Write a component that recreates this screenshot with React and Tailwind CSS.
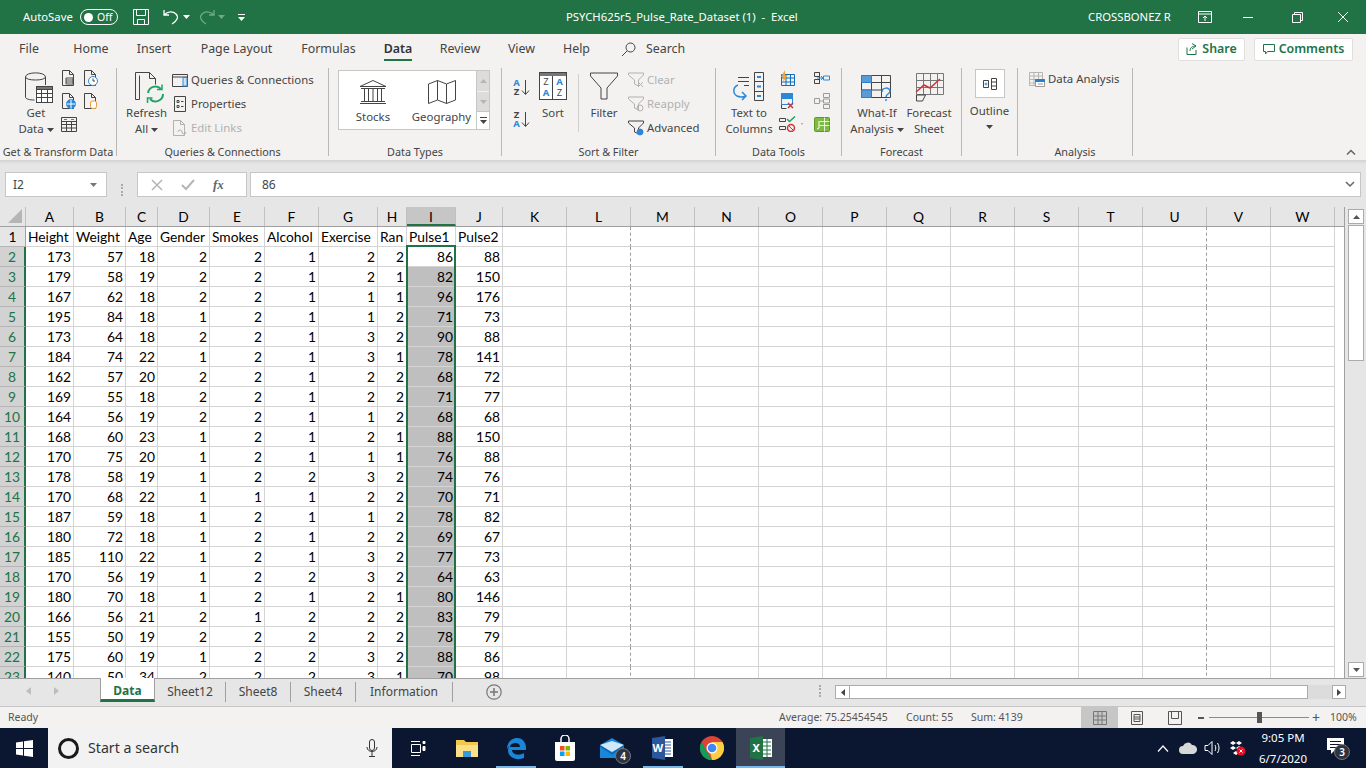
import React from 'react';

const tabs = [
  ['File', 'w-[58px]'], ['Home', 'w-[66px]'], ['Insert', 'w-[60px]'], ['Page Layout', 'w-[105px]'], ['Formulas', 'w-[79px]'],
  ['Data', 'w-[60px]'], ['Review', 'w-[64px]'], ['View', 'w-[59px]'], ['Help', 'w-[51px]'],
];

const columns = [
  ['A', 'w-[48px]'], ['B', 'w-[52px]'], ['C', 'w-[32px]'], ['D', 'w-[52px]'], ['E', 'w-[55px]'], ['F', 'w-[54px]'],
  ['G', 'w-[59px]'], ['H', 'w-[29px]'], ['I', 'w-[49px]'], ['J', 'w-[47px]'],
  ['K', 'w-[64px]'], ['L', 'w-[64px]'], ['M', 'w-[64px]'], ['N', 'w-[64px]'], ['O', 'w-[64px]'], ['P', 'w-[64px]'], ['Q', 'w-[64px]'],
  ['R', 'w-[64px]'], ['S', 'w-[64px]'], ['T', 'w-[64px]'], ['U', 'w-[64px]'], ['V', 'w-[64px]'], ['W', 'w-[64px]'],
];

const headers = ['Height', 'Weight', 'Age', 'Gender', 'Smokes', 'Alcohol', 'Exercise', 'Ran', 'Pulse1', 'Pulse2'];

const rows = [
  [173, 57, 18, 2, 2, 1, 2, 2, 86, 88],
  [179, 58, 19, 2, 2, 1, 2, 1, 82, 150],
  [167, 62, 18, 2, 2, 1, 1, 1, 96, 176],
  [195, 84, 18, 1, 2, 1, 1, 2, 71, 73],
  [173, 64, 18, 2, 2, 1, 3, 2, 90, 88],
  [184, 74, 22, 1, 2, 1, 3, 1, 78, 141],
  [162, 57, 20, 2, 2, 1, 2, 2, 68, 72],
  [169, 55, 18, 2, 2, 1, 2, 2, 71, 77],
  [164, 56, 19, 2, 2, 1, 1, 2, 68, 68],
  [168, 60, 23, 1, 2, 1, 2, 1, 88, 150],
  [170, 75, 20, 1, 2, 1, 1, 1, 76, 88],
  [178, 58, 19, 1, 2, 2, 3, 2, 74, 76],
  [170, 68, 22, 1, 1, 1, 2, 2, 70, 71],
  [187, 59, 18, 1, 2, 1, 1, 2, 78, 82],
  [180, 72, 18, 1, 2, 1, 2, 2, 69, 67],
  [185, 110, 22, 1, 2, 1, 3, 2, 77, 73],
  [170, 56, 19, 1, 2, 2, 3, 2, 64, 63],
  [180, 70, 18, 1, 2, 1, 2, 1, 80, 146],
  [166, 56, 21, 2, 1, 2, 2, 2, 83, 79],
  [155, 50, 19, 2, 2, 2, 2, 2, 78, 79],
  [175, 60, 19, 1, 2, 2, 3, 2, 88, 86],
  [140, 50, 34, 2, 2, 2, 3, 1, 70, 98],
];

const Caret = ({ className = 'fill-[#444]' }) => (
  <svg width="7" height="4" viewBox="0 0 7 4" className={`inline-block ${className}`}><path d="M0 0h7L3.5 4z" /></svg>
);

const Ico = ({ w = 16, h = 16, children, className = '' }) => (
  <svg width={w} height={h} viewBox={`0 0 ${w} ${h}`} fill="none" stroke="#444" strokeWidth="1" className={`shrink-0 ${className}`}>{children}</svg>
);

const Doc = ({ stroke = '#444' }) => <path d="M1.5.5h7l4 4v11h-11z M8.5.5v4h4" stroke={stroke} />;

const Group = ({ label, className, children }) => (
  <div className={`h-[88px] border-r border-[#b8b8b8] shrink-0 ${className}`}>
    <div className="h-[76px] flex">{children}</div>
    <div className="h-[16px] leading-[16px] text-center text-[10.800px] text-[#444] whitespace-nowrap">{label}</div>
  </div>
);

const SmallBtn = ({ icon, label, muted }) => (
  <div className={`h-[22px] flex items-center gap-[3px] whitespace-nowrap ${muted ? 'text-[#b1b1b1]' : ''}`}>
    {icon}
    <span>{label}</span>
  </div>
);

const BigLabel = ({ one, two, caret }) => (
  <div className="mt-[1px] leading-[16px] text-center whitespace-nowrap">
    <div>{one}</div>
    <div>{two}{caret && <Caret className="fill-[#444] ml-[3px] align-middle" />}</div>
  </div>
);

const SortOrder = ({ top, bottom, topBlue }) => (
  <div className="w-[18px] h-[18px] flex items-center">
    <div className="w-[9px] text-[9.500px] leading-[9px] font-bold text-center">
      <div className={topBlue ? 'text-[#2b88d8]' : ''}>{top}</div>
      <div className={topBlue ? '' : 'text-[#2b88d8]'}>{bottom}</div>
    </div>
    <Ico w={9} h={18}><path d="M4.500 2v14M1 12.500l3.500 4 3.500-4" /></Ico>
  </div>
);

const Ribbon = () => (
  <div className="h-[98px] pt-[6px] flex bg-[#f3f2f1] text-[11.400px] text-[#444]">
    <Group label="Get & Transform Data" className="w-[117px]">
      <div className="ml-[18px] w-[36px] flex flex-col items-center pt-[4px]">
        <Ico w={28} h={32} className="ml-[5px]">
          <path d="M.5 5c0-5.500 20-5.500 20 0v8M.5 5c0 4 20 4 20 0M.5 5v20c0 2 4 3 9 3" />
          <rect x="11.500" y="14.500" width="16" height="16" fill="#fff" />
          <path d="M11.500 14.500h16v3h-16z" fill="#777" />
          <path d="M11.500 21.500h16M11.500 25.500h16M16.500 17v13M22.500 17v13" />
        </Ico>
        <BigLabel one="Get" two="Data" caret />
      </div>
      <div className="ml-[7px] mt-[2px] grid grid-cols-[16px_16px] gap-x-[6px] gap-y-[7px] content-start">
        <Ico><Doc /><path d="M5 8h7v6H5zM5 10h7M5 12h7" fill="#fff" /></Ico>
        <Ico><Doc /><circle cx="10" cy="11" r="4.5" fill="#fff" stroke="#2b88d8" /><path d="M10 8.500v2.500h2" /></Ico>
        <Ico><Doc /><circle cx="10" cy="11" r="4.500" fill="#2b88d8" stroke="#2b88d8" /><path d="M5.500 11h9M10 6.500v9" stroke="#fff" /></Ico>
        <Ico><Doc /><rect x="7.500" y="8" width="6" height="7.500" rx="2" fill="#fff" stroke="#ed9a3a" /></Ico>
        <Ico><path d="M.5 1.500h15v14H.5zM.5 5.500h15M.5 8.500h15M.5 12h15M5.500 5.500v10M10.500 5.500v10" /><path d="M3 3.500h3M10 3.500h3" stroke="#2b88d8" /></Ico>
      </div>
    </Group>

    <Group label="Queries & Connections" className="w-[212px]">
      <div className="ml-[10px] w-[39px] flex flex-col items-center pt-[4px]">
        <Ico w={32} h={32} className="ml-[6px]">
          <path d="M5.500 27.500h-4v-27h14l6 6v6M15.500.5v6h6" />
          <path d="M5.500 3.500v24" />
          <path d="M14 21a7.500 7.500 0 0 1 13-4M29 22a7.500 7.500 0 0 1-13 5" stroke="#21a366" strokeWidth="2" />
          <path d="M28 12.500v5h-5M13.500 31v-5h5" stroke="#21a366" strokeWidth="1.500" />
        </Ico>
        <BigLabel one="Refresh" two="All" caret />
      </div>
      <div className="ml-[6px] pt-[1px] flex flex-col gap-[2px]">
        <SmallBtn label="Queries & Connections" icon={<Ico><path d="M.5 2.500h15v12H.5zM.5 5h15" /><path d="M11 5.500h4v8.500h-4z" fill="#cfe2f5" stroke="#2b88d8" /></Ico>} />
        <SmallBtn label="Properties" icon={<Ico><path d="M2.500.5h11v15h-11z" /><path d="M5 4.500h2v2H5zM5 9.500h2v2H5zM9 5.500h2.500M9 10.500h2.500" /></Ico>} />
        <SmallBtn muted label="Edit Links" icon={<Ico><Doc stroke="#b1b1b1" /><path d="M6 12a2 2 0 0 1 4 0 2 2 0 0 0 4 0" stroke="#b1b1b1" /></Ico>} />
      </div>
    </Group>

    <Group label="Data Types" className="w-[173px]">
      <div className="ml-[9px] mt-[2px] w-[152px] h-[60px] flex bg-white border border-[#c6c6c6]">
        <div className="w-[68px] flex flex-col items-center pt-[9px]">
          <Ico w={28} h={24}>
            <path d="M14 .5 1 6.500h26zM2 8.500h24M2 21.500h24M1 23.500h26" />
            <path d="M5.500 9v12M9.500 9v12M14 9v12M18.500 9v12M22.500 9v12" />
          </Ico>
          <div className="mt-[4px]">Stocks</div>
        </div>
        <div className="w-[69px] flex flex-col items-center pt-[9px]">
          <Ico w={28} h={24}>
            <path d="M.5 4 9.500.5l9 3.500 9-3.500V20l-9 3.500-9-3.500-9 3.500zM9.500.5V20M18.500 4v19.500" />
          </Ico>
          <div className="mt-[4px]">Geography</div>
        </div>
        <div className="w-[13px] flex flex-col border-l border-[#c6c6c6]">
          <div className="h-[21px] bg-[#dcdcdc] flex items-center justify-center border-b border-[#f3f2f1]"><Caret className="fill-[#b5b5b5] rotate-180" /></div>
          <div className="h-[19px] bg-[#dcdcdc] flex items-center justify-center"><Caret className="fill-[#b5b5b5]" /></div>
          <div className="flex-1 flex flex-col items-center justify-center gap-[2px] border-t border-[#c6c6c6]">
            <div className="w-[7px] h-[1px] bg-[#444]" />
            <Caret />
          </div>
        </div>
      </div>
    </Group>

    <Group label="Sort & Filter" className="w-[214px]">
      <div className="ml-[10px] mt-[10px] flex flex-col gap-[14px]">
        <SortOrder top="A" bottom="Z" topBlue />
        <SortOrder top="Z" bottom="A" />
      </div>
      <div className="ml-[9px] w-[28px] flex flex-col items-center pt-[4px]">
        <div className="w-[28px] h-[28px] bg-white border border-[#444] flex flex-col shrink-0">
          <div className="h-[3px] bg-[#777]" />
          <div className="flex-1 flex text-[9.500px] leading-[11px] text-center">
            <div className="w-1/2 border-r border-[#444]"><div>Z</div><div className="font-bold text-[#2b88d8]">A</div></div>
            <div className="w-1/2"><div className="font-bold text-[#2b88d8]">A</div><div>Z</div></div>
          </div>
        </div>
        <div className="mt-[5px] leading-[16px]">Sort</div>
      </div>
      <div className="ml-[11px] mt-[6px] w-[1px] h-[58px] bg-[#d0d0d0]" />
      <div className="ml-[11px] w-[28px] flex flex-col items-center pt-[4px]">
        <Ico w={28} h={28}><path d="M.5 1h27v3L17 16v11h-6V16L.5 4z" /></Ico>
        <div className="mt-[5px] leading-[16px]">Filter</div>
      </div>
      <div className="ml-[10px] pt-[1px] flex flex-col gap-[2px]">
        <SmallBtn muted label="Clear" icon={<Ico><path d="M.5 1h15v2l-5 5v6l-4-2V8l-6-5z" stroke="#b1b1b1" /><path d="M10 10l5 5M15 10l-5 5" stroke="#b1b1b1" /></Ico>} />
        <SmallBtn muted label="Reapply" icon={<Ico><path d="M.5 1h15v2l-5 5v6l-4-2V8l-6-5z" stroke="#b1b1b1" /><circle cx="12" cy="12" r="3" stroke="#b1b1b1" /></Ico>} />
        <SmallBtn label="Advanced" icon={<Ico><path d="M.5 1h15v2l-5 5v6l-4-2V8l-6-5z" /><circle cx="12" cy="12" r="3" fill="#2b88d8" stroke="#2b88d8" /></Ico>} />
      </div>
    </Group>

    <Group label="Data Tools" className="w-[126px]">
      <div className="ml-[8px] w-[50px] flex flex-col items-center pt-[4px]">
        <Ico w={34} h={30}>
          <path d="M6 5.500h11M6 9.500h11M12 13.500h5" />
          <path d="M22.500.5h9v28h-9zM22.500 9.500h9M22.500 19.500h9" />
          <path d="M25 5h4M25 14.500h4M25 24h4" stroke="#2b88d8" strokeWidth="2" />
          <path d="M6 13a6 6 0 0 0-1 11c2 1 6 1 9 0M10 20l4 4-4 4" stroke="#2b88d8" strokeWidth="1.500" />
        </Ico>
        <div className="mt-[3px] leading-[16px] text-center whitespace-nowrap"><div>Text to</div><div>Columns</div></div>
      </div>
      <div className="ml-[5px] mt-[2px] grid grid-cols-[24px_17px] gap-x-[11px] gap-y-[7px] content-start">
        <Ico><path d="M2.500 4.500h13v11h-13zM2.500 8h13M2.500 12h13M7 4.500v11M11.500 4.500v11" stroke="#106ebe" /><path d="M6 0 2 7h3l-1 5 5-7H6z" fill="#f2a33a" stroke="none" /></Ico>
        <Ico><path d="M.5 2.500h5v4h-5zM.5 9.500h5v4h-5zM5.500 2.500v11" /><path d="M9.500 6h6v4h-6z" stroke="#2b88d8" /><path d="M3 8h6M7 6l2 2-2 2" stroke="#2b88d8" /></Ico>
        <Ico><path d="M2.500.5h11v11h-11z" stroke="#2b88d8" /><path d="M2.500.5h11v5h-11z" fill="#2b88d8" stroke="#2b88d8" /><path d="M9 10l5 5M14 10l-5 5" stroke="#d13438" strokeWidth="1.500" /><path d="M2.500 11.500v4h5" stroke="#444" /></Ico>
        <Ico><path d="M.5 5.500h5v5h-5zM9.500.5h6v4h-6zM9.500 6h6v4h-6zM9.500 11.500h6v4h-6zM5.500 8h4" stroke="#9a9a9a" /></Ico>
        <div className="flex items-center gap-[5px]">
          <Ico w={17} h={16}><path d="M.5 2.500h6v3h-6zM.5 10.500h6v3h-6z" /><path d="M8 3l2.500 2.500L16 .5" stroke="#21a366" strokeWidth="1.500" /><circle cx="12" cy="12" r="3.500" stroke="#d13438" strokeWidth="1.500" /><path d="M9.500 9.500l5 5" stroke="#d13438" /></Ico>
          <Caret />
        </div>
        <Ico><rect x=".5" y="1.500" width="15" height="14" rx="1" fill="#7fba42" stroke="#5c9a25" /><path d="M10.500 1.500v14M5.500 5.500h10M5.500 9.500h10" stroke="#e6f2d9" /><path d="M5 5v7l-2 1" stroke="#fff" /></Ico>
      </div>
    </Group>

    <Group label="Forecast" className="w-[120px]">
      <div className="ml-[6px] w-[58px] flex flex-col items-center pt-[7px]">
        <Ico w={32} h={27} className="mb-[2px]">
          <path d="M.5.5h29v22H.5zM.5 7.500h29M.5 15h29M10.500.5v22M20.500.5v22" />
          <path d="M.5.5h10v7H.5zM.5 15h10v7.500H.5z" fill="#5b9bd5" stroke="#2b7cd3" />
          <path d="M21 17c0-5 8-5 8-1 0 3-4 3-4 6M25 24v2" stroke="#2b88d8" strokeWidth="1.500" fill="#f3f2f1" />
        </Ico>
        <BigLabel one="What-If" two="Analysis" caret />
      </div>
      <div className="ml-[1px] w-[44px] flex flex-col items-center pt-[5px]">
        <Ico w={30} h={29}>
          <path d="M2.500.5h27v21h-27zM2.500 7.500h27M2.500 14.500h27M9.500.5v21M16.500.5v21M23.500.5v21" stroke="#777" />
          <path d="M2 19l8-7 6 3 10-9" stroke="#d13438" strokeWidth="1.500" />
          <path d="M2.500 22v6h6l3-6z" fill="#f3f2f1" />
        </Ico>
        <div className="mt-[3px] leading-[16px] text-center whitespace-nowrap"><div>Forecast</div><div>Sheet</div></div>
      </div>
    </Group>

    <div className="w-[56px] h-[88px] shrink-0 border-r border-[#b8b8b8] flex flex-col items-center">
      <div className="mt-[1px] w-[30px] h-[29px] bg-white border border-[#c6c6c6] flex items-center justify-center">
        <Ico><path d="M1.500 4.500h5v7h-5zM9.500 2.500h5v11h-5zM9.500 6h5M9.500 10h5" /><path d="M4 6.500v3M2.500 8h3" stroke="#2b88d8" /></Ico>
      </div>
      <div className="mt-[5px] leading-[16px]">Outline</div>
      <Caret className="fill-[#444] mt-[6px]" />
    </div>

    <Group label="Analysis" className="w-[115px]">
      <div className="ml-[11px] mt-[2px] h-[18px] flex items-center gap-[3px]">
        <Ico><path d="M.5 1.500h13v13H.5zM.5 5h13M.5 8.500h13M.5 12h13M5 1.500v13M9.500 1.500v13" stroke="#b5b5b5" /><path d="M6.500 8.500h9v7h-9z" fill="#fff" stroke="#999" /><path d="M6.500 8.500h9v2h-9z" fill="#2b7cd3" stroke="#2b7cd3" /><path d="M9 13h5" stroke="#999" /></Ico>
        <span className="whitespace-nowrap">Data Analysis</span>
      </div>
    </Group>

    <div className="flex-1 flex justify-end items-end pr-[10px] pb-[5px]">
      <Ico w={10} h={6}><path d="M1 5.500l4-4 4 4" stroke="#666" strokeWidth="1.500" /></Ico>
    </div>
  </div>
);

const Scrollbtn = ({ className, children }) => (
  <div className={`bg-white border border-[#ababab] flex items-center justify-center shrink-0 ${className}`}>{children}</div>
);

const Sheet = () => (
  <div className="relative h-[471px] flex bg-[#e6e6e6] overflow-hidden font-['Lato',sans-serif] text-[13.800px] text-black">
    <div className="w-[1345px] shrink-0 bg-white border-r border-[#a0a0a0]">
      <div className="h-[20px] flex bg-[#e6e6e6] border-b border-[#a0a0a0]">
        <div className="w-[26px] shrink-0 flex items-end justify-end pr-[3px] pb-[3px] border-r border-[#c0c0c0]">
          <svg width="14" height="14" viewBox="0 0 14 14" className="fill-[#b5b5b5]"><path d="M14 0v14H0z" /></svg>
        </div>
        {columns.map(([name, w]) => (
          <div key={name} className={`${w} shrink-0 text-center leading-[19px] border-r border-[#c0c0c0] ${name === 'I' ? 'bg-[#c6c6c6] border-b-2 border-b-[#217346]' : ''}`}>{name}</div>
        ))}
      </div>
      {[headers, ...rows].map((row, i) => (
        <div key={i} className="h-[20px] flex">
          <div className={`w-[26px] shrink-0 text-center leading-[19px] border-b ${i > 0 ? 'bg-[#d2d2d2] text-[#217346] border-b-[#b5b5b5] border-r-2 border-r-[#217346]' : 'bg-[#e6e6e6] border-b-[#b5b5b5] border-r border-r-[#a0a0a0]'}`}>{i + 1}</div>
          {columns.map(([name, w], c) => (
            <div
              key={name}
              className={`${w} shrink-0 leading-[19px] border-b border-r border-[#d4d4d4] whitespace-nowrap overflow-hidden ${name === 'L' || name === 'U' ? 'border-r-[#999] [border-right-style:dashed]!' : ''} ${i === 0 ? 'text-left pl-[2px]' : 'text-right pr-[2px]'} ${name === 'I' && i > 1 ? 'bg-[#bfbfbf]' : ''}`}
            >
              {row[c]}
            </div>
          ))}
        </div>
      ))}
    </div>
    {/* selection box over the Pulse1 column */}
    <div className="absolute left-[406px] top-[38px] w-[50px] h-[440px] border-2 border-[#217346] pointer-events-none" />
    <div className="ml-[3px] w-[16px] pt-[2px] flex flex-col">
      <Scrollbtn className="h-[15px]"><Caret className="fill-[#555] rotate-180" /></Scrollbtn>
      <div className="h-[136px] bg-white border border-[#ababab] mt-[1px]" />
      <div className="flex-1" />
      <Scrollbtn className="h-[15px] mb-[1px]"><Caret className="fill-[#555]" /></Scrollbtn>
    </div>
  </div>
);

const SheetTabs = () => (
  <div className="h-[29px] flex items-start bg-[#e6e6e6] border-y border-[#a0a0a0] border-b-[#c6c6c6] text-[12px] text-[#444]">
    <div className="w-[100px] h-[23px] flex items-center pl-[26px] gap-[23px] shrink-0">
      <svg width="5" height="8" viewBox="0 0 5 8" className="fill-[#bdbdbd]"><path d="M5 0v8L0 4z" /></svg>
      <svg width="5" height="8" viewBox="0 0 5 8" className="fill-[#bdbdbd]"><path d="M0 0v8l5-4z" /></svg>
    </div>
    <div className="w-[55px] h-[24px] -mt-[1px] bg-white border-x border-[#a0a0a0] border-b-[3px] border-b-[#217346] text-center font-bold text-[#217346] leading-[26px]">Data</div>
    {[['Sheet12', 'w-[71px]'], ['Sheet8', 'w-[65px]'], ['Sheet4', 'w-[65px]'], ['Information', 'w-[97px]']].map(([t, w]) => (
      <div key={t} className={`${w} h-[20px] mt-[3px] text-center leading-[20px] border-r border-[#a0a0a0]`}>{t}</div>
    ))}
    <svg width="16" height="16" viewBox="0 0 16 16" fill="none" stroke="#777" strokeWidth="1.200" className="ml-[33px] mt-[5px]"><circle cx="8" cy="8" r="7.200" /><path d="M8 4v8M4 8h8" strokeWidth="1.500" /></svg>
    <div className="ml-[317px] mt-[6px] w-[3px] h-[12px] border-l-2 border-dotted border-[#aaa]" />
    <div className="ml-[13px] mt-[6px] w-[511px] h-[14px] flex bg-[#dcdcdc]">
      <Scrollbtn className="w-[15px]"><svg width="4" height="7" viewBox="0 0 4 7" className="fill-[#444]"><path d="M4 0v7L0 3.500z" /></svg></Scrollbtn>
      <div className="w-[458px] bg-white border-y border-r border-[#ababab]" />
      <div className="flex-1" />
      <Scrollbtn className="w-[14px]"><svg width="4" height="7" viewBox="0 0 4 7" className="fill-[#444]"><path d="M0 0v7l4-3.500z" /></svg></Scrollbtn>
    </div>
  </div>
);

const StatusBar = () => (
  <div className="h-[21px] flex items-center bg-[#f3f2f1] text-[10.500px] text-[#555] whitespace-nowrap">
    <div className="w-[779px] pl-[8px] shrink-0">Ready</div>
    <div className="w-[127px] shrink-0">Average: 75.25454545</div>
    <div className="w-[65px] shrink-0">Count: 55</div>
    <div className="w-[110px] shrink-0">Sum: 4139</div>
    <div className="w-[37px] h-full bg-[#c6c6c6] flex items-center justify-center shrink-0">
      <Ico w={14} h={14}><path d="M.5.5h13v13H.5zM.5 5h13M.5 9h13M5 .5v13M9 .5v13" stroke="#777" /></Ico>
    </div>
    <div className="ml-[12px] shrink-0">
      <Ico w={14} h={14}><path d="M1.500.5h11v13h-11zM4 3.500h6v7H4zM4 6h6M4 8h6" stroke="#555" /></Ico>
    </div>
    <div className="ml-[24px] shrink-0">
      <Ico w={14} h={14}><path d="M.5.5h13v13H.5zM3.500.5v7h7v-7" stroke="#555" /></Ico>
    </div>
    <div className="ml-[16px] w-[6px] h-[2px] bg-[#555] shrink-0" />
    <div className="ml-[5px] w-[100px] h-[1px] bg-[#8a8a8a] flex items-center justify-center shrink-0">
      <div className="w-[5px] h-[11px] bg-[#555]" />
    </div>
    <div className="ml-[3px] text-[14px] leading-none text-[#555] shrink-0">+</div>
    <div className="ml-[10px] shrink-0">100%</div>
  </div>
);

const TaskIcon = ({ active, underline, children }) => (
  <div className={`w-[49px] h-full flex items-center justify-center shrink-0 relative ${active ? 'bg-[#3b4357]' : ''}`}>
    {children}
    {underline && <div className={`absolute bottom-0 h-[2px] bg-[#76b9ed] ${active ? 'left-0 right-0' : 'left-[5px] right-[4px]'}`} />}
  </div>
);

const Badge = ({ n, className }) => (
  <div className={`absolute w-[16px] h-[16px] rounded-full bg-[#2d3340] border border-[#777] text-white text-[10px] leading-[14px] text-center font-semibold ${className}`}>{n}</div>
);

const Taskbar = () => (
  <div className="h-[40px] flex items-center bg-[#0b1631] text-white">
    <div className="w-[48px] h-full flex items-center justify-center shrink-0">
      <svg width="17" height="17" viewBox="0 0 17 17" className="fill-white"><path d="M0 2.500 7 1.500v6.500H0zM8 1.300 17 0v8H8zM0 9h7v6.500l-7-1zM8 9h9v8l-9-1.300z" /></svg>
    </div>
    <div className="w-[344px] h-full bg-[#f2f2f2] flex items-center shrink-0 text-[#333] text-[14.200px]">
      <div className="ml-[10px] w-[21px] h-[21px] rounded-full border-[3px] border-[#1a1a1a]" />
      <div className="ml-[9px]">Start a search</div>
      <div className="ml-auto mr-[14px]">
        <Ico w={12} h={18}><rect x="3.500" y=".5" width="5" height="11" rx="2.500" stroke="#333" /><path d="M1 8c0 6 10 6 10 0M6 13v4M3 17.500h6" stroke="#333" /></Ico>
      </div>
    </div>
    <div className="w-[1px] shrink-0" />
    <TaskIcon>
      <svg width="16" height="15" viewBox="0 0 16 15" fill="none" stroke="#fff"><path d="M1 .5h9M1 14.500h9M1.500 3.500h9v8h-9z" /><path d="M13 .5h2v2h-2zM13 5.500h2v4h-2z" fill="#fff" /></svg>
    </TaskIcon>
    <TaskIcon>
      <svg width="22" height="18" viewBox="0 0 22 18"><path d="M0 1h8l2 2h12v15H0z" fill="#f3c94d" /><path d="M0 6h22v12H0z" fill="#fbe08a" /><path d="M7 12h8v6H7z" fill="#3a9ad9" /></svg>
    </TaskIcon>
    <TaskIcon underline>
      <svg width="24" height="24" viewBox="0 0 24 24" fill="none"><path d="M3 13C3 6 8 2 13 2c6 0 9 5 9 10v2H8c0 5 8 6 12 3v5c-7 3-16 0-16-8 0-3 3-6 5-7-2 1-3 3-3 4h10c0-5-8-6-13 2z" fill="#1a86d8" /></svg>
    </TaskIcon>
    <TaskIcon>
      <svg width="22" height="26" viewBox="0 0 22 26" fill="none"><path d="M1 7h20v17a2 2 0 0 1-2 2H3a2 2 0 0 1-2-2z" fill="#fff" /><path d="M7 8V4a4 4 0 0 1 8 0v4" stroke="#fff" strokeWidth="1.500" /><path d="M6 11h4.500v4.500H6z" fill="#f25022" /><path d="M11.500 11H16v4.500h-4.500z" fill="#7fba00" /><path d="M6 16.500h4.500V21H6z" fill="#00a4ef" /><path d="M11.500 16.500H16V21h-4.500z" fill="#ffb900" /></svg>
    </TaskIcon>
    <TaskIcon>
      <svg width="24" height="24" viewBox="0 0 24 24" className="-ml-[3px]"><path d="M0 9 12 2l12 7v13H0z" fill="#1a86d8" /><path d="M0 9l12 7 12-7-12-4z" fill="#cfe8fa" /><path d="M0 9l12 8 12-8v1.500l-12 8-12-8z" fill="#0b5fa8" /></svg>
      <Badge n="4" className="right-[7px] bottom-[4px]" />
    </TaskIcon>
    <TaskIcon underline>
      <div className="relative w-[24px] h-[24px]">
        <svg width="24" height="24" viewBox="0 0 24 24"><path d="M7 3h15v18H7z" fill="#fff" /><path d="M14 6h6M14 9h6M14 12h6M14 15h6M14 18h6" stroke="#2b579a" /><path d="M1 2l13-2v24L1 22z" fill="#2b579a" /></svg>
        <span className="absolute left-[2px] top-[4px] text-[11px] font-bold leading-[16px] text-white">W</span>
      </div>
    </TaskIcon>
    <TaskIcon>
      <svg width="24" height="24" viewBox="0 0 24 24"><circle cx="12" cy="12" r="12" fill="#db4437" /><path d="M12 24a12 12 0 0 0 10.400-18H12l-3 6z" fill="#ffcd40" /><path d="M1.600 6 7 16l5 8a12 12 0 0 1-10.400-18z" fill="#0f9d58" /><circle cx="12" cy="12" r="5.500" fill="#fff" /><circle cx="12" cy="12" r="4.300" fill="#4285f4" /></svg>
    </TaskIcon>
    <TaskIcon active underline>
      <div className="relative w-[24px] h-[24px]">
        <svg width="24" height="24" viewBox="0 0 24 24"><path d="M7 3h16v18H7z" fill="#fff" /><path d="M14 6h8M14 10h8M14 14h8M14 18h8M18 3v18" stroke="#217346" /><path d="M1 2l13-2v24L1 22z" fill="#217346" /></svg>
        <span className="absolute left-[4px] top-[4px] text-[11px] font-bold leading-[16px] text-white">X</span>
      </div>
    </TaskIcon>
    <div className="flex-1" />
    <div className="flex items-center shrink-0 text-[11.500px]">
      <svg width="12" height="7" viewBox="0 0 12 7" fill="none" stroke="#fff" strokeWidth="1.200"><path d="M1 6.500l5-5.500 5 5.500" /></svg>
      <svg width="18" height="12" viewBox="0 0 18 12" className="ml-[10px] fill-[#d8d8d8]"><path d="M4 12a4 4 0 0 1 0-8 5 5 0 0 1 9-1 4.500 4.500 0 0 1 1 9z" /></svg>
      <svg width="17" height="16" viewBox="0 0 17 16" fill="none" stroke="#fff" className="ml-[7px]"><path d="M1 5.500h3l4-4v13l-4-4H1zM11 5c1 2 1 4 0 6M13.500 3c2 3 2 7 0 10" /></svg>
      <svg width="16" height="16" viewBox="0 0 16 16" className="ml-[9px] fill-white"><path d="M3 1l3 2-3 2-3-2zM9 1l3 2-3 2-3-2zM3 6l3 2-3 2-3-2zM9 6l3 2-3 2-3-2zM6 11l3 2-3 2-3-2z" /><circle cx="11" cy="11" r="4.500" fill="#e81123" /><path d="M9.500 9.500l3 3M12.500 9.500l-3 3" stroke="#fff" /></svg>
      <div className="ml-[2px] w-[70px] text-center leading-[21px]"><div>9:05 PM</div><div>6/7/2020</div></div>
      <div className="relative ml-[9px] mr-[21px] w-[18px] h-[20px]">
        <svg width="17" height="16" viewBox="0 0 17 16" className="fill-white"><path d="M0 0h17v12H8l-4 4v-4H0z" /><path d="M3 3.500h11M3 6.500h11M3 9.500h7" stroke="#0b1631" /></svg>
        <Badge n="3" className="-right-[5px] -bottom-[2px]" />
      </div>
    </div>
  </div>
);

export default function App() {
  return (
    <div className="w-[1366px] h-[768px] overflow-hidden flex flex-col font-['Noto_Sans',sans-serif] bg-[#e6e6e6]">
      {/* title bar */}
      <div className="h-[34px] flex items-center bg-[#217346] text-white text-[11.300px] shrink-0">
        <div className="w-[566px] flex items-center shrink-0">
          <span className="ml-[23px] w-[50px]">AutoSave</span>
          <div className="ml-[7px] w-[38px] h-[16px] rounded-full border border-white flex items-center pl-[3px] gap-[4px]">
            <div className="w-[9px] h-[9px] rounded-full bg-white" />
            <span className="text-[10.500px] leading-none">Off</span>
          </div>
          <svg width="16" height="16" viewBox="0 0 16 16" fill="none" stroke="#fff" className="ml-[15px]"><path d="M.5.5h15v15H.5zM3.500.5v6h9v-6M4.500 15.500v-5h7v5" /></svg>
          <svg width="16" height="16" viewBox="0 0 16 16" fill="none" stroke="#fff" strokeWidth="1.300" className="ml-[14px]"><path d="M1 1v5h5M1 6c4-4 9-4 12-1 3 3 1 7-4 10" /></svg>
          <Caret className="fill-white ml-[4px]" />
          <svg width="16" height="16" viewBox="0 0 16 16" fill="none" stroke="#6fa98a" strokeWidth="1.300" className="ml-[9px]"><path d="M15 1v5h-5M15 6c-4-4-9-4-12-1-3 3-1 7 4 10" /></svg>
          <Caret className="fill-[#6fa98a] ml-[3px]" />
          <div className="ml-[13px] flex flex-col gap-[2px] items-center"><div className="w-[7px] h-[1px] bg-white" /><Caret className="fill-white" /></div>
        </div>
        <div className="w-[522px] shrink-0 whitespace-pre">PSYCH625r5_Pulse_Rate_Dataset (1)  -  Excel</div>
        <span className="w-[110px] shrink-0">CROSSBONEZ R</span>
        <svg width="14" height="12" viewBox="0 0 14 12" fill="none" stroke="#fff" className="shrink-0"><path d="M.5.5h13v11H.5zM.5 3h13M7 10V5M5 7l2-2 2 2" /></svg>
        <div className="ml-[31px] w-[10px] h-[1px] bg-white shrink-0" />
        <svg width="11" height="11" viewBox="0 0 11 11" fill="none" stroke="#fff" className="ml-[39px] shrink-0"><path d="M.5 2.500h8v8h-8zM2.500 2.500v-2h8v8h-2" /></svg>
        <svg width="12" height="12" viewBox="0 0 12 12" fill="none" stroke="#fff" className="ml-[34px] shrink-0"><path d="M1 1l10 10M11 1 1 11" /></svg>
      </div>

      {/* ribbon tabs */}
      <div className="h-[28px] pt-[2px] flex items-center bg-[#f3f2f1] text-[12.400px] text-[#444] shrink-0">
        {tabs.map(([t, w]) => (
          <div key={t} className={`${w} shrink-0 flex justify-center`}>
            <span className={`relative leading-[20px] ${t === 'Data' ? 'font-semibold text-[#333] border-b-[2px] border-[#217346] -mb-[2px]' : ''}`}>{t}</span>
          </div>
        ))}
        <svg width="15" height="15" viewBox="0 0 15 15" fill="none" stroke="#444" className="ml-[19px] shrink-0"><circle cx="9.500" cy="5.500" r="4.500" /><path d="M6 9 1 14" /></svg>
        <span className="ml-[10px]">Search</span>
        <div className="ml-auto mr-[13px] flex items-center gap-[9px] text-[#217346] font-semibold">
          <div className="h-[23px] w-[67px] bg-white border border-[#e1dfdd] rounded-[2px] flex items-center justify-center gap-[4px]">
            <svg width="12" height="12" viewBox="0 0 12 12" fill="none" stroke="#217346"><path d="M1 4.500v7h9V7M6 .5l4 2.500-4 3M10 3C6 3 4 5 4 8" /></svg>
            Share
          </div>
          <div className="h-[23px] w-[99px] bg-white border border-[#e1dfdd] rounded-[2px] flex items-center justify-center gap-[4px]">
            <svg width="12" height="12" viewBox="0 0 12 12" fill="none" stroke="#217346"><path d="M.5 1.500h11v7h-7l-2 2.500v-2.500h-2z" /></svg>
            Comments
          </div>
        </div>
      </div>

      <Ribbon />

      {/* formula bar */}
      <div className="h-[47px] shrink-0 bg-gradient-to-b from-[#d2d2d2] to-[#e6e6e6] to-[4px] pt-[12px] pl-[5px] pr-[5px] flex text-[12px] text-[#444]">
        <div className="w-[102px] h-[25px] bg-white border border-[#c6c6c6] flex items-center justify-between pl-[7px] pr-[9px]">
          I2
          <Caret className="fill-[#777]" />
        </div>
        <div className="w-[30px] flex items-center justify-center"><div className="h-[12px] border-l-2 border-dotted border-[#aaa]" /></div>
        <div className="w-[110px] h-[25px] bg-white border border-[#c6c6c6] flex items-center">
          <svg width="12" height="12" viewBox="0 0 12 12" fill="none" stroke="#b5b5b5" strokeWidth="1.500" className="ml-[13px]"><path d="M1 1l10 10M11 1 1 11" /></svg>
          <svg width="14" height="12" viewBox="0 0 14 12" fill="none" stroke="#b5b5b5" strokeWidth="2" className="ml-[18px]"><path d="M1 6l4 4 8-9" /></svg>
          <span className="ml-[18px] font-['Liberation_Serif',serif] italic font-bold text-[13px] text-[#666]">fx</span>
        </div>
        <div className="ml-[3px] flex-1 h-[25px] bg-white border border-[#c6c6c6] flex items-center justify-between pl-[11px] pr-[5px]">
          86
          <svg width="10" height="7" viewBox="0 0 10 7" fill="none" stroke="#666" strokeWidth="1.500"><path d="M1 1l4 4 4-4" /></svg>
        </div>
      </div>

      <Sheet />
      <SheetTabs />
      <StatusBar />
      <Taskbar />
    </div>
  );
}
